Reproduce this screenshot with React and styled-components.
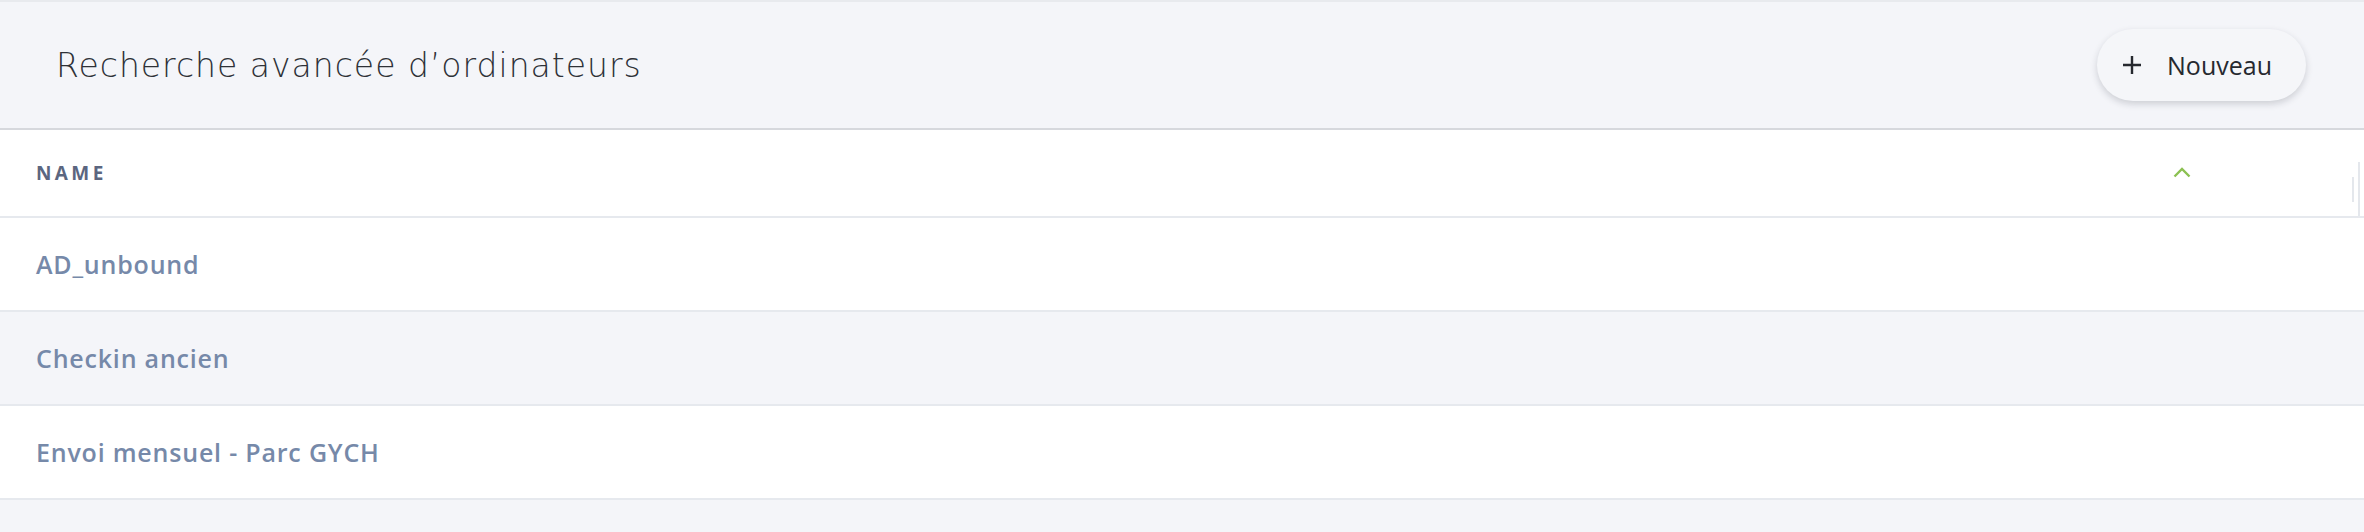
import React from 'react';
import styled, { createGlobalStyle } from 'styled-components';

const Global = createGlobalStyle`
  body {
    margin: 0;
    background: #f4f5f9;
    font-family: "Open Sans", Lato, sans-serif;
  }
`;

const Page = styled.div`
  width: 100%;
  min-height: 532px;
  background: #f4f5f9;
`;

const Header = styled.header`
  height: 126px;
  border-top: 2px solid #e8eaee;
  border-bottom: 2px solid #d6d8dd;
  display: flex;
  align-items: center;
  justify-content: space-between;
  padding: 0 58px 0 56px;
`;

const Title = styled.h1`
  margin: 0;
  font-family: "DejaVu Sans", "Open Sans", sans-serif;
  font-size: 33px;
  font-weight: 200;
  letter-spacing: 1px;
  color: #2e3137;
`;

const NewButton = styled.button`
  height: 72px;
  border: none;
  border-radius: 36px;
  background: #f5f6f9;
  box-shadow: 0 3px 7px rgba(30, 35, 50, 0.18);
  display: flex;
  align-items: center;
  gap: 25px;
  padding: 0 34px 0 25px;
  font-family: inherit;
  font-size: 25px;
  color: #26292f;
  cursor: pointer;
`;

const Table = styled.div`
  background: #ffffff;
`;

const HeadRow = styled.div`
  height: 86px;
  display: flex;
  align-items: center;
  padding-left: 36px;
  border-bottom: 2px solid #e6e9ee;
`;

const HeadLabel = styled.span`
  flex: 1;
  font-size: 19px;
  font-weight: 700;
  letter-spacing: 3.4px;
  color: #5b6680;
`;

const SortIcon = styled.svg`
  width: 18px;
  height: 11px;
  margin-right: 161px;
  margin-top: -2px;
`;

const Handles = styled.div`
  align-self: stretch;
  display: flex;
  align-items: flex-end;
  gap: 4px;
  margin-right: 4px;
`;

const Handle = styled.div`
  width: 2px;
  height: ${(p) => p.h}px;
  margin-bottom: ${(p) => p.mb || 0}px;
  background: #e4e7ec;
`;

const Row = styled.div`
  height: 92px;
  display: flex;
  align-items: center;
  padding-left: 36px;
  border-bottom: 2px solid #e6e9ee;
  background: ${(p) => (p.striped ? '#f4f5f9' : '#ffffff')};
`;

const RowName = styled.span`
  font-size: 25px;
  font-weight: 600;
  letter-spacing: 0.8px;
  color: #7689a9;
`;

const rows = ['AD_unbound', 'Checkin ancien', 'Envoi mensuel - Parc GYCH'];

const App = () => {
  return (
    <Page>
      <Global />
      <Header>
        <Title>Recherche avancée d’ordinateurs</Title>
        <NewButton>
          <svg width="20" height="20" viewBox="0 0 20 20">
            <path d="M10 1v18M1 10h18" stroke="#26292f" strokeWidth="2.4" fill="none" />
          </svg>
          Nouveau
        </NewButton>
      </Header>
      <Table>
        <HeadRow>
          <HeadLabel>NAME</HeadLabel>
          <SortIcon viewBox="0 0 18 11">
            <polyline points="1.5,9.5 9,2 16.5,9.5" stroke="#8cc152" strokeWidth="2.4" fill="none" />
          </SortIcon>
          <Handles>
            <Handle h={25} mb={14} />
            <Handle h={54} />
          </Handles>
        </HeadRow>
        {rows.map((name, i) => (
          <Row key={name} striped={i % 2 === 1}>
            <RowName>{name}</RowName>
          </Row>
        ))}
      </Table>
    </Page>
  );
};

export default App;
